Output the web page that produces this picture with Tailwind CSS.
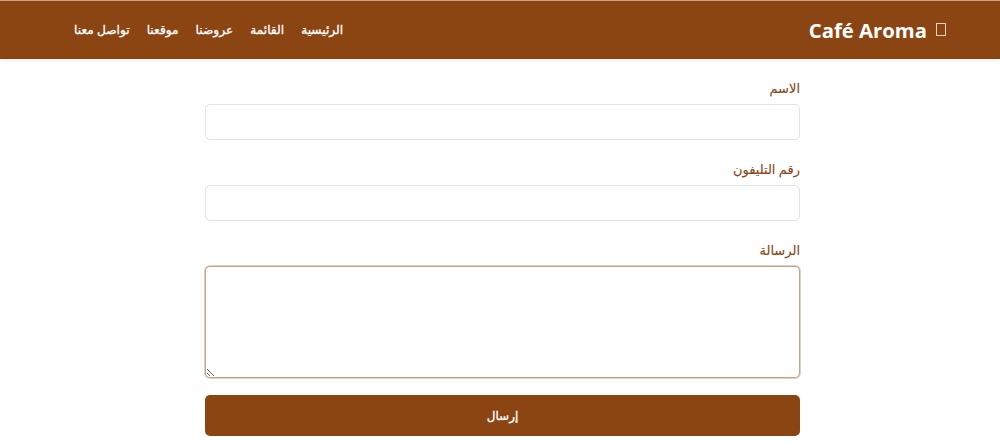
<!DOCTYPE html>
<html lang="ar" dir="rtl">
<head>
  <meta charset="UTF-8" />
  <title>Café Aroma</title>
  <script src="https://cdn.jsdelivr.net/npm/@tailwindcss/browser@4"></script>
</head>
<body class="bg-white h-[445px] overflow-hidden font-['Open_Sans','DejaVu_Sans',sans-serif]">
  <!-- Navbar -->
  <nav class="h-[59px] bg-[#8b4513] border-t border-[#c9a184] shadow-[0_2px_4px_rgba(0,0,0,0.06)] pr-[54px] pl-[74px] flex justify-between items-center">
    <div class="flex items-center gap-[9px] text-white">
      <span class="w-[10px] h-[13px] border border-[#e8d0bc] mb-[2px]"></span>
      <span dir="ltr" class="text-[20.3px] font-bold font-['Open_Sans',sans-serif]">Café Aroma</span>
    </div>
    <ul class="flex gap-[17px] text-white text-[12.2px] [-webkit-text-stroke:0.3px_white]">
      <li><a href="#">الرئيسية</a></li>
      <li><a href="#">القائمة</a></li>
      <li><a href="#">عروضنا</a></li>
      <li><a href="#">موقعنا</a></li>
      <li><a href="#">تواصل معنا</a></li>
    </ul>
  </nav>

  <!-- Contact form -->
  <form class="w-[595px] mr-[200px] mt-[20px] flex flex-col">
    <label class="h-[25px] text-[13px] text-[#8b4513] [-webkit-text-stroke:0.12px_#8b4513]">الاسم</label>
    <input type="text" class="h-[36px] border border-[#e3e3e3] rounded-[5px] px-3 bg-white" />
    <label class="mt-[20px] h-[25px] text-[13px] text-[#8b4513] [-webkit-text-stroke:0.12px_#8b4513]">رقم التليفون</label>
    <input type="text" class="h-[36px] border border-[#e3e3e3] rounded-[5px] px-3 bg-white" />
    <label class="mt-[20px] h-[25px] text-[13px] text-[#8b4513] [-webkit-text-stroke:0.12px_#8b4513]">الرسالة</label>
    <textarea class="h-[112px] border border-[#8b4513]/50 rounded-[5px] px-3 py-2 bg-white outline-none shadow-[0_0_0_1px_rgba(139,69,19,0.25)]"></textarea>
    <button type="button" class="mt-[17px] h-[41px] bg-[#8b4513] text-white rounded-[5px] text-[12px] [-webkit-text-stroke:0.3px_white]">إرسال</button>
  </form>
</body>
</html>
